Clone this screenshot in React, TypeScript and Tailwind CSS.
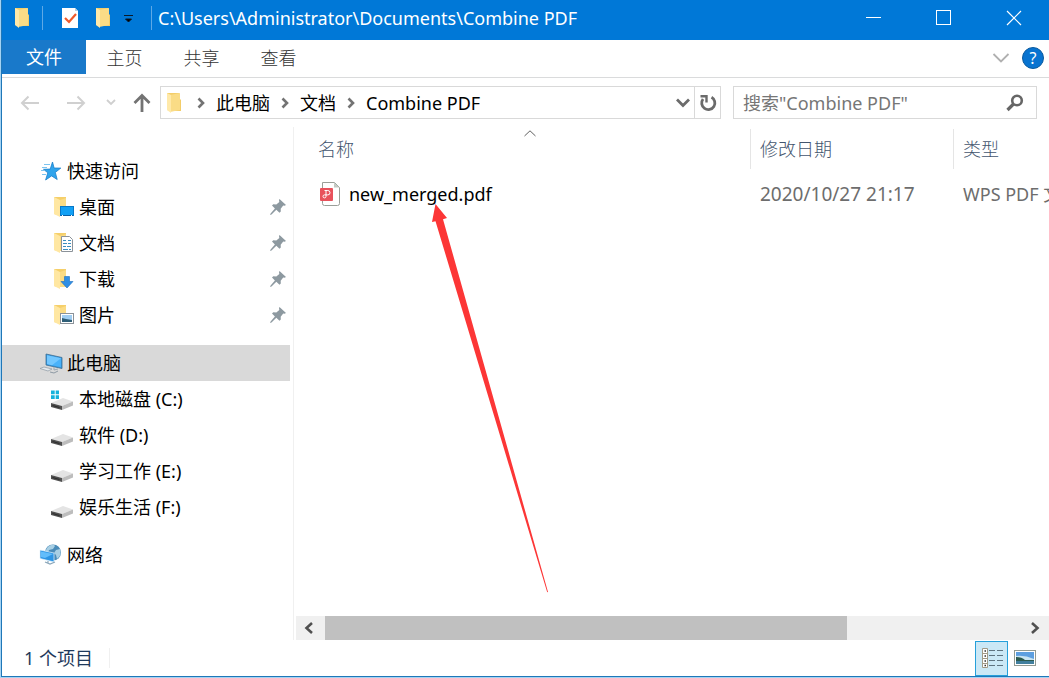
import type { ReactNode } from "react";

const FONT = "font-['Noto_Sans','Noto_Sans_CJK_SC',sans-serif]";

function Folder({ children }: { children?: ReactNode }) {
  return (
    <svg width="24" height="24" viewBox="0 0 24 24" className="shrink-0" aria-hidden="true">
      <path d="M3 2h12v18H7l-4-1z" fill="#f5cf6a" />
      <path d="M3 2l6 3v17l-6-3z" fill="#ffe7a2" />
      <path d="M9 5l6-2v17H9z" fill="#fbdc85" />
      {children}
    </svg>
  );
}

/* Small folder used on the title bar and in the address box */
function MiniFolder() {
  return (
    <svg width="16" height="22" viewBox="0 0 16 22" aria-hidden="true">
      <path d="M1 1h12v5l2 2v11H5l-4-1z" fill="#f3cd69" />
      <path d="M4 3l10-2v17l-10 2z" fill="#fadc86" />
      <path d="M1 1l4 2v18l-4-3z" fill="#ffe9a9" />
    </svg>
  );
}

function DesktopIcon() {
  return (
    <Folder>
      <rect x="9.5" y="11.500" width="13" height="9" fill="#12a0f5" stroke="#0878c8" />
      <path d="M10 20.500h12" stroke="#0a5fa5" />
      <path d="M11 20.500h1M20 20.500h1" stroke="#fff" />
    </Folder>
  );
}

function DocumentsIcon() {
  return (
    <Folder>
      <path d="M10.500 5.500h8l3 3v12h-11z" fill="#fff" stroke="#8b9299" />
      <path d="M12 9.500h3M17 9.500h3M12 12.500h4M17 12.500h3M12 15.500h3M16 15.500h4M12 18.500h5M18 18.500h2" stroke="#3a8fc0" />
    </Folder>
  );
}

function DownloadsIcon() {
  return (
    <Folder>
      <path d="M13.500 9.500h5v5h3.500l-6 6.500-6-6.500h3.500z" fill="#2f8fe5" stroke="#1b6fc0" strokeWidth=".6" />
    </Folder>
  );
}

function PicturesIcon() {
  return (
    <Folder>
      <rect x="9.500" y="10.500" width="13" height="10" fill="#fff" stroke="#8b9299" />
      <path d="M11 12h10v7H11z" fill="#9fcdf2" />
      <path d="M11 15l4 1 6 1v2H11z" fill="#2f5f78" />
    </Folder>
  );
}

function StarIcon() {
  return (
    <svg width="24" height="24" viewBox="0 0 24 24" className="shrink-0" aria-hidden="true">
      <path d="M13.500 3l1.600 6 6.700.1-5.500 4.300 1.900 7.100-5.600-3.600-6 4.100 2.200-7.200-4.300-3.500 6.700-.2z" fill="#2fa4ec" stroke="#1b7fca" strokeWidth=".8" />
      <path d="M5 5.500h6M3 8.500h5M2 11.500h4M3 15.500h4" stroke="#7cc4f0" />
    </svg>
  );
}

function ComputerIcon() {
  return (
    <svg width="24" height="24" viewBox="0 0 24 24" className="shrink-0" aria-hidden="true">
      <path d="M7 3l16 3.500v11L7 14z" fill="#3297e0" stroke="#3f6f93" strokeWidth=".8" />
      <path d="M8 4.200l14 3v9L8 13z" fill="#49b2fa" />
      <path d="M8 4.200l14 3-9 7L8 13z" fill="#72c7ff" />
      <path d="M1 17.500l4-1.500 8 2-4 2z" fill="#e4e9ed" stroke="#8e9aa4" strokeWidth=".7" />
      <path d="M11 21l4 1 4-2" fill="none" stroke="#8e9aa4" />
      <path d="M15 16v3l4-1" fill="none" stroke="#9aa7b1" />
    </svg>
  );
}

function DriveIcon({ system }: { system?: boolean }) {
  return (
    <svg width="24" height="24" viewBox="0 0 24 24" className="shrink-0" aria-hidden="true">
      <path d="M0 16l12-5 10 3.500-11 4.500z" fill="#e4e4e4" />
      <path d="M0 16l11 3v4L0 20z" fill="#505050" />
      <path d="M11 19l11-4.500v4l-11 4.500z" fill="#bdbdbd" />
      <path d="M1.500 18l7 2v1l-7-2z" fill="#2c2c2c" />
      {system && (
        <path d="M0 3.500h3.700v3.700H0zM4.700 3.500H8v3.700H4.700zM0 8.200h3.700v3.700H0zM4.700 8.200H8v3.700H4.700z" fill="#16b2dc" />
      )}
    </svg>
  );
}

function NetworkIcon() {
  return (
    <svg width="24" height="24" viewBox="0 0 24 24" className="shrink-0" aria-hidden="true">
      <circle cx="14" cy="9.500" r="8" fill="#4a8bb8" />
      <path d="M8 5c3-4 7-4 8-2l-2 3-4 1-1 3-3-1zM17 7l4-1c1 4 1 7-3 10l-1-4-2-2z" fill="#a8cfe4" />
      <path d="M1 7l14 3v9L1 15.500z" fill="#2d95e4" stroke="#e6f3fc" strokeWidth=".7" />
      <path d="M2 8.500l12 2.500-8 4-4-1z" fill="#62bdfb" />
      <path d="M6 19l5 2 5-2M9 18v2" fill="none" stroke="#8ba7ba" strokeWidth="1.200" />
    </svg>
  );
}

function Pin() {
  return (
    <svg width="16" height="16" viewBox="0 0 16 16" aria-hidden="true">
      <path d="M9.500 0L16 6l-1.500.8-1.300-.2-2.500 3.200.1 2.700-1.300 1.200-3.200-3L1.500 15.500 0 16l.6-1.600 4.300-4.900L2 6.500l1.300-1.200 3 .1L9.300 3 9 1z" fill="#8d99a0" />
    </svg>
  );
}

function Crumb() {
  return (
    <svg width="8" height="12" viewBox="0 0 8 12" aria-hidden="true">
      <path d="M1.500 1.500L6 6l-4.500 4.500" fill="none" stroke="#737373" strokeWidth="2.600" />
    </svg>
  );
}

function PdfIcon() {
  return (
    <svg width="22" height="26" viewBox="0 0 22 26" className="shrink-0" aria-hidden="true">
      <path d="M3.500 1.500h12l5 5v16q0 2-2 2h-13q-2 0-2-2z" fill="#fff" stroke="#9a9f98" />
      <path d="M15 1.500v5h5.500z" fill="#c3cac3" />
      <rect x="1" y="7" width="13" height="13" rx="1" fill="#e8525c" />
      <path d="M5.500 9.500h3.300a2.200 2.200 0 0 1 0 4.400H5.400a1.500 1.500 0 1 0 1.600 1.600V9.700" fill="none" stroke="#fff" />
    </svg>
  );
}

const groups = [
  {
    label: "快速访问",
    icon: <StarIcon />,
    selected: false,
    items: [
      { label: "桌面", icon: <DesktopIcon />, pinned: true },
      { label: "文档", icon: <DocumentsIcon />, pinned: true },
      { label: "下载", icon: <DownloadsIcon />, pinned: true },
      { label: "图片", icon: <PicturesIcon />, pinned: true },
    ],
  },
  {
    label: "此电脑",
    icon: <ComputerIcon />,
    selected: true,
    items: [
      { label: "本地磁盘 (C:)", icon: <DriveIcon system />, pinned: false },
      { label: "软件 (D:)", icon: <DriveIcon />, pinned: false },
      { label: "学习工作 (E:)", icon: <DriveIcon />, pinned: false },
      { label: "娱乐生活 (F:)", icon: <DriveIcon />, pinned: false },
    ],
  },
  { label: "网络", icon: <NetworkIcon />, selected: false, items: [] },
];

function TitleBar() {
  return (
    <header className="flex h-10 shrink-0 items-start bg-[#0078d7] text-white">
      <div className="flex h-9 items-center pl-3">
        <MiniFolder />
        <span className="ml-3 h-6 w-px bg-[#5ea9e6]" />
        <button aria-label="属性" className="ml-[18px]">
          <svg width="18" height="22" viewBox="0 0 18 22" aria-hidden="true">
            <path d="M1 1h13l3 3v17H1z" fill="#fff" />
            <path d="M14 1v3h3z" fill="#b9cfe2" />
            <path d="M4 11l4 4 7-8" fill="none" stroke="#f0592a" strokeWidth="2.200" />
          </svg>
        </button>
        <button aria-label="新建文件夹" className="ml-4">
          <MiniFolder />
        </button>
        <button aria-label="自定义快速访问工具栏" className="ml-3">
          <svg width="12" height="12" viewBox="0 0 12 12" aria-hidden="true">
            <path d="M1 3.500h9M2.500 7h6l-3 3z" fill="#000" stroke="#0b1a2a" />
          </svg>
        </button>
        <span className="ml-4 h-6 w-px bg-[#5ea9e6]" />
        <h1 className="ml-1.5 text-lg leading-6">C:\Users\Administrator\Documents\Combine PDF</h1>
      </div>
      <div className="ml-auto flex h-9 items-center">
        <button aria-label="最小化" className="flex h-9 w-[70px] items-center justify-center">
          <svg width="16" height="16" viewBox="0 0 16 16" aria-hidden="true">
            <path d="M0 7.500h15" stroke="#fff" />
          </svg>
        </button>
        <button aria-label="最大化" className="flex h-9 w-[70px] items-center justify-center">
          <svg width="16" height="16" viewBox="0 0 16 16" aria-hidden="true">
            <rect x=".5" y=".5" width="14" height="14" fill="none" stroke="#fff" />
          </svg>
        </button>
        <button aria-label="关闭" className="flex h-9 w-[70px] items-center justify-center">
          <svg width="16" height="16" viewBox="0 0 16 16" aria-hidden="true">
            <path d="M1 1l14 14M15 1L1 15" stroke="#fff" strokeWidth="1.200" />
          </svg>
        </button>
      </div>
    </header>
  );
}

function Ribbon() {
  return (
    <nav className="flex h-[38px] shrink-0 items-start border-b border-[#dadbdc] text-[#333]">
      <button className="h-[34px] w-[84px] bg-[#1979ca] text-lg leading-6 text-white">文件</button>
      {["主页", "共享", "查看"].map((tab) => (
        <button key={tab} className="h-9 w-[77px] text-lg leading-6 font-light">
          {tab}
        </button>
      ))}
      <div className="ml-auto flex h-9 items-center gap-3 pr-[5px]">
        <button aria-label="展开功能区">
          <svg width="18" height="10" viewBox="0 0 18 10" aria-hidden="true">
            <path d="M1.500 1l7.500 7.500L16.500 1" fill="none" stroke="#b0b0b0" strokeWidth="1.800" />
          </svg>
        </button>
        <button
          aria-label="帮助"
          className="flex size-[22px] items-center justify-center rounded-full border border-[#0a5a9e] bg-[#0873d0] text-base leading-5 text-white"
        >
          ?
        </button>
      </div>
    </nav>
  );
}

function AddressRow() {
  return (
    <div className="flex h-[49px] shrink-0 items-center pr-3">
      <div className="flex w-[158px] shrink-0 items-center pl-[18px]">
        <button aria-label="后退">
          <svg width="20" height="16" viewBox="0 0 20 16" aria-hidden="true">
            <path d="M19 8H2M8.500 1.500L2 8l6.500 6.500" fill="none" stroke="#d0d0d0" strokeWidth="2" />
          </svg>
        </button>
        <button aria-label="前进" className="ml-[26px]">
          <svg width="20" height="16" viewBox="0 0 20 16" aria-hidden="true">
            <path d="M1 8h17M11.500 1.500L18 8l-6.500 6.500" fill="none" stroke="#d0d0d0" strokeWidth="2" />
          </svg>
        </button>
        <button aria-label="最近浏览的位置" className="ml-5">
          <svg width="10" height="7" viewBox="0 0 10 7" aria-hidden="true">
            <path d="M1 1l4 4 4-4" fill="none" stroke="#cfcfcf" strokeWidth="1.800" />
          </svg>
        </button>
        <button aria-label="上移" className="ml-4">
          <svg width="20" height="20" viewBox="0 0 20 20" aria-hidden="true">
            <path d="M10 19V3M2.500 10L10 2.500l7.500 7.500" fill="none" stroke="#737373" strokeWidth="2.800" />
          </svg>
        </button>
      </div>

      <div className="flex h-[33px] min-w-0 flex-1 items-center border border-[#d9d9d9] text-lg leading-6">
        <span className="ml-[5px]">
          <MiniFolder />
        </span>
        <span className="ml-[15px] flex items-center gap-[11px] whitespace-nowrap">
          <Crumb />
          <button>此电脑</button>
          <Crumb />
          <button>文档</button>
          <Crumb />
          <button>Combine PDF</button>
        </span>
        <button aria-label="以前的位置" className="mr-1 ml-auto">
          <svg width="14" height="10" viewBox="0 0 14 10" aria-hidden="true">
            <path d="M1 1.500l6 6 6-6" fill="none" stroke="#6b6b6b" strokeWidth="2.800" />
          </svg>
        </button>
        <button aria-label="刷新" className="flex h-full w-[26px] items-center justify-center border-l border-[#d9d9d9]">
          <svg width="18" height="18" viewBox="0 0 18 18" aria-hidden="true">
            <path d="M12.500 3.200A6.600 6.600 0 1 1 4 5" fill="none" stroke="#6b6b6b" strokeWidth="2.800" />
            <path d="M1.500 2.200h6v6.300" fill="none" stroke="#6b6b6b" strokeWidth="2.400" />
          </svg>
        </button>
      </div>

      <label className="ml-3 flex h-[33px] w-[304px] shrink-0 items-center border border-[#d9d9d9]">
        <input
          type="text"
          aria-label="搜索"
          placeholder={'搜索"Combine PDF"'}
          className="min-w-0 flex-1 pl-[9px] text-lg leading-6 outline-none placeholder:text-[#767676]"
        />
        <svg width="18" height="18" viewBox="0 0 18 18" className="mr-3" aria-hidden="true">
          <circle cx="11" cy="6.500" r="4.800" fill="none" stroke="#666" strokeWidth="2.600" />
          <path d="M7.500 10L1.500 16" stroke="#666" strokeWidth="3.200" />
        </svg>
      </label>
    </div>
  );
}

function Sidebar() {
  return (
    <aside className="flex w-[292px] shrink-0 flex-col gap-3 border-r border-[#f0f0f0] pt-[26px] pr-[3px] text-lg leading-6">
      {groups.map((group) => (
        <section key={group.label}>
          <button
            className={
              group.selected
                ? "flex h-9 w-full items-center gap-1 bg-[#d9d9d9] pl-[37px]"
                : "flex h-9 w-full items-center gap-1 pl-[37px]"
            }
          >
            {group.icon}
            {group.label}
          </button>
          {group.items.map((item) => (
            <button key={item.label} className="flex h-9 w-full items-center gap-1 pr-1 pl-[49px]">
              {item.icon}
              <span>{item.label}</span>
              {item.pinned && (
                <span className="ml-auto">
                  <Pin />
                </span>
              )}
            </button>
          ))}
        </section>
      ))}
    </aside>
  );
}

function FileList() {
  return (
    <main className="relative flex min-w-0 flex-1 flex-col">
      <div className="flex-1 overflow-hidden">
        <table className="w-full table-fixed text-left text-lg leading-6 whitespace-nowrap">
          <thead className="text-[#43556e]">
            <tr className="h-11">
              <th className="pl-6 font-light">名称</th>
              <th className="w-[203px] p-0 font-light">
                <div className="flex h-10 items-center border-l border-[#e5e5e5] pl-[9px]">修改日期</div>
              </th>
              <th className="w-24 p-0 font-light">
                <div className="flex h-10 items-center border-l border-[#e5e5e5] pl-[9px]">类型</div>
              </th>
            </tr>
          </thead>
          <tbody className="text-[#6d6d6d]">
            <tr className="h-[46px]">
              <td className="pl-[25px] text-black">
                <span className="flex items-center gap-2">
                  <PdfIcon />
                  new_merged.pdf
                </span>
              </td>
              <td className="pl-[10px] text-[19px]">2020/10/27 21:17</td>
              <td className="overflow-hidden pl-[10px]">WPS PDF 文档</td>
            </tr>
          </tbody>
        </table>
      </div>

      {/* Sort indicator above the name column */}
      <svg width="12" height="7" viewBox="0 0 12 7" className="absolute top-[3px] left-[230px]" aria-hidden="true">
        <path d="M.5 6L6 .800 11.500 6" fill="none" stroke="#606060" />
      </svg>

      {/* Red pointer aimed at the merged file */}
      <svg width="118" height="390" viewBox="0 0 118 390" className="absolute top-[77px] left-[137px]" aria-hidden="true">
        <path d="M4.500 0L16 14l-4 1.200L117 388l-.8.300L4.500 17.200 1 18z" fill="#fc3636" />
      </svg>

      <div className="ml-[2px] flex h-6 shrink-0 bg-[#f0f0f0]">
        <button aria-label="向左滚动" className="flex w-[29px] shrink-0 items-center pl-2">
          <svg width="10" height="12" viewBox="0 0 10 12" aria-hidden="true">
            <path d="M8 1L2.500 6 8 11" fill="none" stroke="#505050" strokeWidth="2.600" />
          </svg>
        </button>
        <div className="min-w-0 flex-1">
          <div className="h-full w-3/4 bg-[#c0c0c0]" />
        </div>
        <button aria-label="向右滚动" className="flex w-7 shrink-0 items-center justify-center">
          <svg width="10" height="12" viewBox="0 0 10 12" aria-hidden="true">
            <path d="M2 1l5.500 5L2 11" fill="none" stroke="#505050" strokeWidth="2.600" />
          </svg>
        </button>
      </div>
    </main>
  );
}

function StatusBar() {
  return (
    <footer className="flex h-9 shrink-0 items-center pr-[13px] text-[#1e395b]">
      <span className="border-r border-[#f0f0f0] pr-4 pl-[22px] text-lg leading-5">1 个项目</span>
      <div className="ml-auto flex items-center gap-[6px]">
        <button
          aria-label="详细信息"
          className="flex h-[35px] w-[33px] items-center justify-center border border-[#26a0da] bg-[#cbe8f6]"
        >
          <svg width="22" height="22" viewBox="0 0 22 22" aria-hidden="true">
            <path d="M1.500 1.500h5v19h-5zM1.500 6.500h5M1.500 11.500h5M1.500 16.500h5" fill="#fff" stroke="#a19a87" />
            <path d="M3.500 4h1.500M3.500 9h1.500M3.500 14h1.500M3.500 18.500h1.500" stroke="#333" strokeWidth="1.500" />
            <path d="M8 3.500h6M16 3.500h6M8 8.500h6M16 8.500h6M8 13.500h6M16 13.500h6M8 18.500h6M16 18.500h6" stroke="#5f7380" />
          </svg>
        </button>
        <button aria-label="大缩略图">
          <svg width="22" height="16" viewBox="0 0 22 16" aria-hidden="true">
            <rect x=".5" y=".5" width="21" height="15" fill="#fff" stroke="#929a92" />
            <path d="M2 2h18v12H2z" fill="#5d9fe0" />
            <path d="M2 6q9-1 18 3v1H2z" fill="#c8e4f2" />
            <path d="M2 7q6 0 9 3h9v1H2z" fill="#2c5a4e" />
            <path d="M2 11h18v3H2z" fill="#417f9e" />
          </svg>
        </button>
      </div>
    </footer>
  );
}

export default function App() {
  return (
    <div className={`${FONT} flex min-h-screen flex-col border-b border-l border-[#a5d3f3] bg-white text-black`}>
      <div className="flex flex-1 flex-col border-b border-l border-[#1f77b8]">
        <TitleBar />
        <Ribbon />
        <AddressRow />
        <div className="flex min-h-0 flex-1">
          <Sidebar />
          <FileList />
        </div>
        <StatusBar />
      </div>
    </div>
  );
}
